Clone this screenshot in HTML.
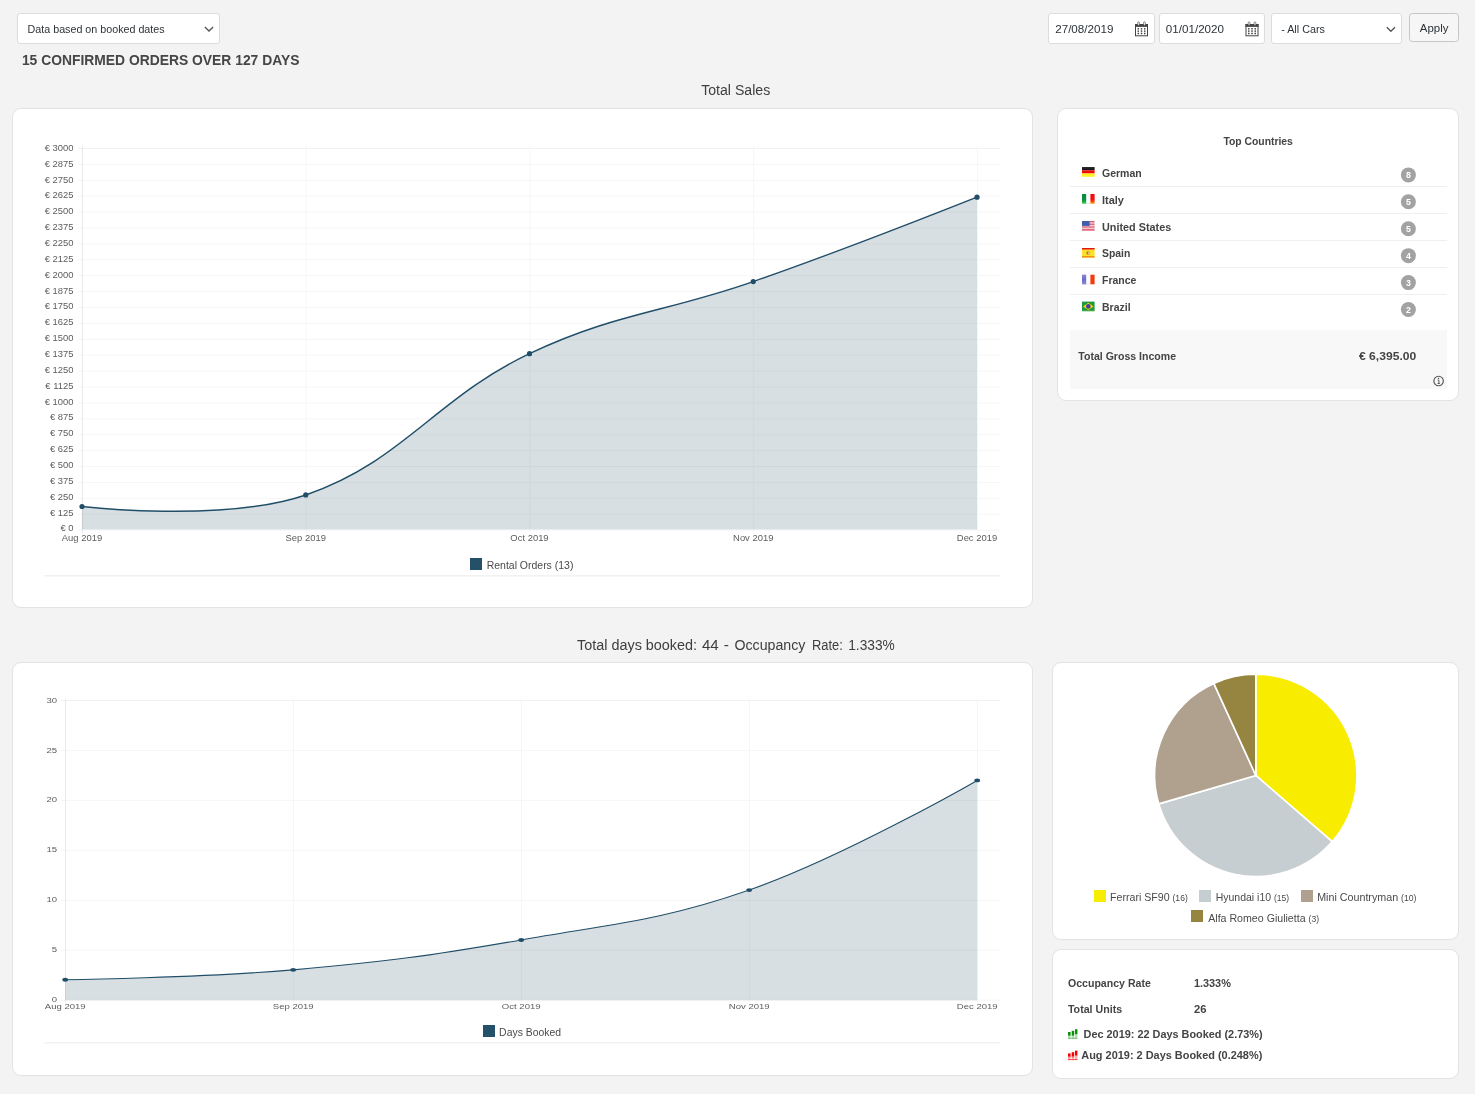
<!DOCTYPE html>
<html><head><meta charset="utf-8"><title>Stats</title>
<style>
*{box-sizing:border-box;margin:0;padding:0}
html,body{width:1475px;height:1094px;overflow:hidden}
body{background:#f3f3f3;font-family:"Liberation Sans",sans-serif;color:#444;position:relative}
.abs{position:absolute}
.card{position:absolute;background:#fff;border:1px solid #e3e3e3;border-radius:9px}
.inp{position:absolute;background:#fff;border:1px solid #dcdcdc;border-radius:3px;height:31px;top:13px;font-size:11.6px;color:#2c3338;line-height:29.6px;padding-left:6.4px;white-space:nowrap}
.t{position:absolute;white-space:nowrap;line-height:1}
.x{position:absolute;white-space:nowrap;line-height:1;transform-origin:0 0}
.x small{font-size:81%}
.b{font-weight:bold}
svg{position:absolute;left:0;top:0;overflow:visible;will-change:transform}
svg text{font-family:"Liberation Sans",sans-serif}
.row{position:absolute;left:1070px;width:376.5px;height:1px;background:#efefef}
.flag{position:absolute;left:1082px;width:13px;height:10px}
.cn{position:absolute;left:1102px;font-weight:bold;font-size:10.6px;color:#444;line-height:1;white-space:nowrap}
.bd{position:absolute;left:1401px;width:15px;height:15px;border-radius:50%;background:#a3a3a3;color:#fff;font-weight:bold;font-size:9px;line-height:15px;text-align:center}
.lg{position:absolute;width:12px;height:12px}
.lt{position:absolute;font-size:10.6px;color:#333;line-height:1;white-space:nowrap}
.lt small{font-size:8.6px}
</style></head><body>

<!-- top bar -->
<div class="inp" style="left:17px;width:203px;padding-left:10px;font-size:10.9px"></div>
<svg width="1475" height="60"><path d="M204.9 27.1 L209 31.1 L213.1 27.1" fill="none" stroke="#555" stroke-width="1.35"/></svg>

<div class="inp" style="left:1048px;width:106.5px"></div>
<div class="inp" style="left:1159px;width:106px"></div>
<div class="inp" style="left:1270.5px;width:131px;padding-left:10px;font-size:10.9px"></div>
<svg width="1475" height="60"><path d="M1386.8 27.3 L1390.9 31.2 L1395 27.3" fill="none" stroke="#555" stroke-width="1.35"/></svg>
<div class="abs" style="left:1409px;top:13px;width:50px;height:29px;border:1px solid #c6c6c6;border-radius:3.5px;background:#f6f6f6;color:#2c3338;font-size:11.5px;line-height:27px;text-align:center"></div>

<!-- titles -->

<!-- cards -->
<div class="card" style="left:12px;top:108px;width:1020.5px;height:500px"></div>
<div class="card" style="left:1057px;top:108px;width:402px;height:293px"></div>
<div class="card" style="left:12px;top:662px;width:1020.5px;height:413.5px"></div>
<div class="card" style="left:1052px;top:662px;width:407px;height:278px"></div>
<div class="card" style="left:1052px;top:949px;width:407px;height:129.5px"></div>

<!-- chart 1 -->
<svg width="1475" height="1094">
<line x1="78" x2="1000.2" y1="148.40" y2="148.40" stroke="#f0f0f0" stroke-width="1"/>
<line x1="78" x2="1000.2" y1="164.31" y2="164.31" stroke="#f6f6f6" stroke-width="1"/>
<line x1="78" x2="1000.2" y1="180.22" y2="180.22" stroke="#f6f6f6" stroke-width="1"/>
<line x1="78" x2="1000.2" y1="196.12" y2="196.12" stroke="#f6f6f6" stroke-width="1"/>
<line x1="78" x2="1000.2" y1="212.03" y2="212.03" stroke="#f6f6f6" stroke-width="1"/>
<line x1="78" x2="1000.2" y1="227.94" y2="227.94" stroke="#f6f6f6" stroke-width="1"/>
<line x1="78" x2="1000.2" y1="243.85" y2="243.85" stroke="#f6f6f6" stroke-width="1"/>
<line x1="78" x2="1000.2" y1="259.76" y2="259.76" stroke="#f6f6f6" stroke-width="1"/>
<line x1="78" x2="1000.2" y1="275.66" y2="275.66" stroke="#f6f6f6" stroke-width="1"/>
<line x1="78" x2="1000.2" y1="291.57" y2="291.57" stroke="#f6f6f6" stroke-width="1"/>
<line x1="78" x2="1000.2" y1="307.48" y2="307.48" stroke="#f6f6f6" stroke-width="1"/>
<line x1="78" x2="1000.2" y1="323.39" y2="323.39" stroke="#f6f6f6" stroke-width="1"/>
<line x1="78" x2="1000.2" y1="339.30" y2="339.30" stroke="#f6f6f6" stroke-width="1"/>
<line x1="78" x2="1000.2" y1="355.20" y2="355.20" stroke="#f6f6f6" stroke-width="1"/>
<line x1="78" x2="1000.2" y1="371.11" y2="371.11" stroke="#f6f6f6" stroke-width="1"/>
<line x1="78" x2="1000.2" y1="387.02" y2="387.02" stroke="#f6f6f6" stroke-width="1"/>
<line x1="78" x2="1000.2" y1="402.93" y2="402.93" stroke="#f6f6f6" stroke-width="1"/>
<line x1="78" x2="1000.2" y1="418.84" y2="418.84" stroke="#f6f6f6" stroke-width="1"/>
<line x1="78" x2="1000.2" y1="434.74" y2="434.74" stroke="#f6f6f6" stroke-width="1"/>
<line x1="78" x2="1000.2" y1="450.65" y2="450.65" stroke="#f6f6f6" stroke-width="1"/>
<line x1="78" x2="1000.2" y1="466.56" y2="466.56" stroke="#f6f6f6" stroke-width="1"/>
<line x1="78" x2="1000.2" y1="482.47" y2="482.47" stroke="#f6f6f6" stroke-width="1"/>
<line x1="78" x2="1000.2" y1="498.38" y2="498.38" stroke="#f6f6f6" stroke-width="1"/>
<line x1="78" x2="1000.2" y1="514.28" y2="514.28" stroke="#f6f6f6" stroke-width="1"/>
<line x1="78" x2="1000.2" y1="530.19" y2="530.19" stroke="#f6f6f6" stroke-width="1"/>
<line x1="82.40" x2="82.40" y1="145.80" y2="533.00" stroke="#e8e8e8" stroke-width="1"/>
<line x1="306.15" x2="306.15" y1="145.80" y2="533.00" stroke="#f6f6f6" stroke-width="1"/>
<line x1="529.90" x2="529.90" y1="145.80" y2="533.00" stroke="#f6f6f6" stroke-width="1"/>
<line x1="753.65" x2="753.65" y1="145.80" y2="533.00" stroke="#f6f6f6" stroke-width="1"/>
<line x1="977.40" x2="977.40" y1="145.80" y2="533.00" stroke="#f6f6f6" stroke-width="1"/>
<path d="M82.00 506.48 C82.00 506.48 223.68 522.96 305.75 494.94 C402.68 461.83 434.70 398.83 529.50 353.64 C613.70 313.50 664.52 312.63 753.25 281.60 C843.52 250.03 977.00 197.13 977.00 197.13 L977.00 529.40 L82.00 529.40 Z" fill="rgba(40,75,92,0.18)"/>
<path d="M82.00 506.48 C82.00 506.48 223.68 522.96 305.75 494.94 C402.68 461.83 434.70 398.83 529.50 353.64 C613.70 313.50 664.52 312.63 753.25 281.60 C843.52 250.03 977.00 197.13 977.00 197.13" fill="none" stroke="#204e69" stroke-width="1.5"/>
<circle cx="82.00" cy="506.48" r="2.6" fill="#204e69"/>
<circle cx="305.75" cy="494.94" r="2.6" fill="#204e69"/>
<circle cx="529.50" cy="353.64" r="2.6" fill="#204e69"/>
<circle cx="753.25" cy="281.60" r="2.6" fill="#204e69"/>
<circle cx="977.00" cy="197.13" r="2.6" fill="#204e69"/>
<text transform="translate(73.5 150.79) scale(1.137 1)" text-anchor="end" font-size="8.3" fill="#5c5c5c">€ 3000</text>
<text transform="translate(73.5 166.65) scale(1.137 1)" text-anchor="end" font-size="8.3" fill="#5c5c5c">€ 2875</text>
<text transform="translate(73.5 182.51) scale(1.137 1)" text-anchor="end" font-size="8.3" fill="#5c5c5c">€ 2750</text>
<text transform="translate(73.5 198.37) scale(1.137 1)" text-anchor="end" font-size="8.3" fill="#5c5c5c">€ 2625</text>
<text transform="translate(73.5 214.23) scale(1.137 1)" text-anchor="end" font-size="8.3" fill="#5c5c5c">€ 2500</text>
<text transform="translate(73.5 230.09) scale(1.137 1)" text-anchor="end" font-size="8.3" fill="#5c5c5c">€ 2375</text>
<text transform="translate(73.5 245.95) scale(1.137 1)" text-anchor="end" font-size="8.3" fill="#5c5c5c">€ 2250</text>
<text transform="translate(73.5 261.81) scale(1.137 1)" text-anchor="end" font-size="8.3" fill="#5c5c5c">€ 2125</text>
<text transform="translate(73.5 277.67) scale(1.137 1)" text-anchor="end" font-size="8.3" fill="#5c5c5c">€ 2000</text>
<text transform="translate(73.5 293.53) scale(1.137 1)" text-anchor="end" font-size="8.3" fill="#5c5c5c">€ 1875</text>
<text transform="translate(73.5 309.39) scale(1.137 1)" text-anchor="end" font-size="8.3" fill="#5c5c5c">€ 1750</text>
<text transform="translate(73.5 325.25) scale(1.137 1)" text-anchor="end" font-size="8.3" fill="#5c5c5c">€ 1625</text>
<text transform="translate(73.5 341.11) scale(1.137 1)" text-anchor="end" font-size="8.3" fill="#5c5c5c">€ 1500</text>
<text transform="translate(73.5 356.97) scale(1.137 1)" text-anchor="end" font-size="8.3" fill="#5c5c5c">€ 1375</text>
<text transform="translate(73.5 372.83) scale(1.137 1)" text-anchor="end" font-size="8.3" fill="#5c5c5c">€ 1250</text>
<text transform="translate(73.5 388.69) scale(1.137 1)" text-anchor="end" font-size="8.3" fill="#5c5c5c">€ 1125</text>
<text transform="translate(73.5 404.55) scale(1.137 1)" text-anchor="end" font-size="8.3" fill="#5c5c5c">€ 1000</text>
<text transform="translate(73.5 420.41) scale(1.137 1)" text-anchor="end" font-size="8.3" fill="#5c5c5c">€ 875</text>
<text transform="translate(73.5 436.27) scale(1.137 1)" text-anchor="end" font-size="8.3" fill="#5c5c5c">€ 750</text>
<text transform="translate(73.5 452.13) scale(1.137 1)" text-anchor="end" font-size="8.3" fill="#5c5c5c">€ 625</text>
<text transform="translate(73.5 467.99) scale(1.137 1)" text-anchor="end" font-size="8.3" fill="#5c5c5c">€ 500</text>
<text transform="translate(73.5 483.85) scale(1.137 1)" text-anchor="end" font-size="8.3" fill="#5c5c5c">€ 375</text>
<text transform="translate(73.5 499.71) scale(1.137 1)" text-anchor="end" font-size="8.3" fill="#5c5c5c">€ 250</text>
<text transform="translate(73.5 515.57) scale(1.137 1)" text-anchor="end" font-size="8.3" fill="#5c5c5c">€ 125</text>
<text transform="translate(73.5 531.43) scale(1.137 1)" text-anchor="end" font-size="8.3" fill="#5c5c5c">€ 0</text>
<text transform="translate(82.00 541.20) scale(1.137 1)" text-anchor="middle" font-size="8.3" fill="#5c5c5c">Aug 2019</text>
<text transform="translate(305.75 541.20) scale(1.137 1)" text-anchor="middle" font-size="8.3" fill="#5c5c5c">Sep 2019</text>
<text transform="translate(529.50 541.20) scale(1.137 1)" text-anchor="middle" font-size="8.3" fill="#5c5c5c">Oct 2019</text>
<text transform="translate(753.25 541.20) scale(1.137 1)" text-anchor="middle" font-size="8.3" fill="#5c5c5c">Nov 2019</text>
<text transform="translate(977.00 541.20) scale(1.137 1)" text-anchor="middle" font-size="8.3" fill="#5c5c5c">Dec 2019</text>
<line x1="61" x2="1000.2" y1="700.50" y2="700.50" stroke="#f0f0f0" stroke-width="1"/>
<line x1="61" x2="1000.2" y1="750.45" y2="750.45" stroke="#f6f6f6" stroke-width="1"/>
<line x1="61" x2="1000.2" y1="800.40" y2="800.40" stroke="#f6f6f6" stroke-width="1"/>
<line x1="61" x2="1000.2" y1="850.35" y2="850.35" stroke="#f6f6f6" stroke-width="1"/>
<line x1="61" x2="1000.2" y1="900.30" y2="900.30" stroke="#f6f6f6" stroke-width="1"/>
<line x1="61" x2="1000.2" y1="950.25" y2="950.25" stroke="#f6f6f6" stroke-width="1"/>
<line x1="61" x2="1000.2" y1="1000.20" y2="1000.20" stroke="#f6f6f6" stroke-width="1"/>
<line x1="65.60" x2="65.60" y1="698.50" y2="1002.50" stroke="#e8e8e8" stroke-width="1"/>
<line x1="293.60" x2="293.60" y1="698.50" y2="1002.50" stroke="#f6f6f6" stroke-width="1"/>
<line x1="521.60" x2="521.60" y1="698.50" y2="1002.50" stroke="#f6f6f6" stroke-width="1"/>
<line x1="749.60" x2="749.60" y1="698.50" y2="1002.50" stroke="#f6f6f6" stroke-width="1"/>
<line x1="977.60" x2="977.60" y1="698.50" y2="1002.50" stroke="#f6f6f6" stroke-width="1"/>
<path d="M65.20 979.81 C65.20 979.81 202.35 977.79 293.20 969.84 C384.75 961.83 430.68 955.76 521.20 939.93 C613.08 923.86 661.68 920.70 749.20 890.08 C844.08 856.89 977.20 780.41 977.20 780.41 L977.20 1000.20 L65.20 1000.20 Z" fill="rgba(40,75,92,0.18)"/>
<path d="M65.20 979.81 C65.20 979.81 202.35 977.79 293.20 969.84 C384.75 961.83 430.68 955.76 521.20 939.93 C613.08 923.86 661.68 920.70 749.20 890.08 C844.08 856.89 977.20 780.41 977.20 780.41" fill="none" stroke="#204e69" stroke-width="1.12"/>
<ellipse cx="65.20" cy="979.81" rx="2.85" ry="1.95" fill="#204e69"/>
<ellipse cx="293.20" cy="969.84" rx="2.85" ry="1.95" fill="#204e69"/>
<ellipse cx="521.20" cy="939.93" rx="2.85" ry="1.95" fill="#204e69"/>
<ellipse cx="749.20" cy="890.08" rx="2.85" ry="1.95" fill="#204e69"/>
<ellipse cx="977.20" cy="780.41" rx="2.85" ry="1.95" fill="#204e69"/>
<text transform="translate(57 702.84) scale(1.47 1)" text-anchor="end" font-size="6.5" fill="#5c5c5c">30</text>
<text transform="translate(57 752.64) scale(1.47 1)" text-anchor="end" font-size="6.5" fill="#5c5c5c">25</text>
<text transform="translate(57 802.44) scale(1.47 1)" text-anchor="end" font-size="6.5" fill="#5c5c5c">20</text>
<text transform="translate(57 852.24) scale(1.47 1)" text-anchor="end" font-size="6.5" fill="#5c5c5c">15</text>
<text transform="translate(57 902.04) scale(1.47 1)" text-anchor="end" font-size="6.5" fill="#5c5c5c">10</text>
<text transform="translate(57 951.84) scale(1.47 1)" text-anchor="end" font-size="6.5" fill="#5c5c5c">5</text>
<text transform="translate(57 1001.64) scale(1.47 1)" text-anchor="end" font-size="6.5" fill="#5c5c5c">0</text>
<text transform="translate(65.20 1009.14) scale(1.47 1)" text-anchor="middle" font-size="6.5" fill="#5c5c5c">Aug 2019</text>
<text transform="translate(293.20 1009.14) scale(1.47 1)" text-anchor="middle" font-size="6.5" fill="#5c5c5c">Sep 2019</text>
<text transform="translate(521.20 1009.14) scale(1.47 1)" text-anchor="middle" font-size="6.5" fill="#5c5c5c">Oct 2019</text>
<text transform="translate(749.20 1009.14) scale(1.47 1)" text-anchor="middle" font-size="6.5" fill="#5c5c5c">Nov 2019</text>
<text transform="translate(977.20 1009.14) scale(1.47 1)" text-anchor="middle" font-size="6.5" fill="#5c5c5c">Dec 2019</text>
<path d="M1255.80 775.40 L1255.80 674.30 A101.10 101.10 0 0 1 1332.21 841.61 Z" fill="#f8ec00" stroke="#fff" stroke-width="1.6" stroke-linejoin="round"/>
<path d="M1255.80 775.40 L1332.21 841.61 A101.10 101.10 0 0 1 1158.80 803.88 Z" fill="#c7ced1" stroke="#fff" stroke-width="1.6" stroke-linejoin="round"/>
<path d="M1255.80 775.40 L1158.80 803.88 A101.10 101.10 0 0 1 1213.80 683.44 Z" fill="#b0a08e" stroke="#fff" stroke-width="1.6" stroke-linejoin="round"/>
<path d="M1255.80 775.40 L1213.80 683.44 A101.10 101.10 0 0 1 1255.80 674.30 Z" fill="#968540" stroke="#fff" stroke-width="1.6" stroke-linejoin="round"/>
</svg>
<svg width="1475" height="1094"><line x1="44" x2="1000.5" y1="575.85" y2="575.85" stroke="#ebebeb"/><line x1="44" x2="1000.5" y1="1042.9" y2="1042.9" stroke="#ebebeb"/></svg>
<div class="lg" style="left:470px;top:558px;background:#255069"></div>


<div class="lg" style="left:483px;top:1025px;background:#255069"></div>

<!-- top countries -->
<div class="row" style="top:186px"></div>
<div class="row" style="top:213px"></div>
<div class="row" style="top:240px"></div>
<div class="row" style="top:267px"></div>
<div class="row" style="top:294px"></div>
<div class="abs" style="left:1070px;top:330px;width:376.5px;height:58.5px;background:#f8f8f8"></div>


<!-- flags -->
<svg width="1475" height="1094" style="pointer-events:none">
<defs>
<linearGradient id="gl" x1="0" y1="0" x2="0" y2="1"><stop offset="0" stop-color="#fff" stop-opacity=".18"/><stop offset=".5" stop-color="#fff" stop-opacity="0"/><stop offset="1" stop-color="#fff" stop-opacity=".22"/></linearGradient>
<linearGradient id="itg" x1="0" y1="0" x2="0" y2="1"><stop offset="0" stop-color="#0a8a44"/><stop offset=".6" stop-color="#0a9040"/><stop offset="1" stop-color="#3fd050"/></linearGradient>
<linearGradient id="itr" x1="0" y1="0" x2="0" y2="1"><stop offset="0" stop-color="#f20a0a"/><stop offset=".6" stop-color="#f41010"/><stop offset="1" stop-color="#ff9a00"/></linearGradient>
</defs>
<g transform="translate(1135 21.5)">
<rect x=".5" y="3" width="12" height="11.3" fill="#fff" stroke="#444" stroke-width="1"/>
<rect x="0" y="2.5" width="13" height="2.9" fill="#444"/>
<rect x="2.7" y=".3" width="1.7" height="3.6" rx=".8" fill="#fff" stroke="#444" stroke-width=".6"/>
<rect x="8.6" y=".3" width="1.7" height="3.6" rx=".8" fill="#fff" stroke="#444" stroke-width=".6"/>
<g fill="#444"><rect x="2.5" y="6.6" width="1.5" height="1.3"/><rect x="5.75" y="6.6" width="1.5" height="1.3"/><rect x="9" y="6.6" width="1.5" height="1.3"/>
<rect x="2.5" y="9" width="1.5" height="1.3"/><rect x="5.75" y="9" width="1.5" height="1.3"/><rect x="9" y="9" width="1.5" height="1.3"/>
<rect x="2.5" y="11.4" width="1.5" height="1.3"/><rect x="5.75" y="11.4" width="1.5" height="1.3"/><rect x="9" y="11.4" width="1.5" height="1.3"/></g>
<g stroke="#444" stroke-width=".5" opacity=".55"><line x1="3.25" y1="6.6" x2="3.25" y2="12.7"/><line x1="6.5" y1="6.6" x2="6.5" y2="12.7"/><line x1="9.75" y1="6.6" x2="9.75" y2="12.7"/></g>
</g>
<g transform="translate(1245.5 21.5)">
<rect x=".5" y="3" width="12" height="11.3" fill="#fff" stroke="#444" stroke-width="1"/>
<rect x="0" y="2.5" width="13" height="2.9" fill="#444"/>
<rect x="2.7" y=".3" width="1.7" height="3.6" rx=".8" fill="#fff" stroke="#444" stroke-width=".6"/>
<rect x="8.6" y=".3" width="1.7" height="3.6" rx=".8" fill="#fff" stroke="#444" stroke-width=".6"/>
<g fill="#444"><rect x="2.5" y="6.6" width="1.5" height="1.3"/><rect x="5.75" y="6.6" width="1.5" height="1.3"/><rect x="9" y="6.6" width="1.5" height="1.3"/>
<rect x="2.5" y="9" width="1.5" height="1.3"/><rect x="5.75" y="9" width="1.5" height="1.3"/><rect x="9" y="9" width="1.5" height="1.3"/>
<rect x="2.5" y="11.4" width="1.5" height="1.3"/><rect x="5.75" y="11.4" width="1.5" height="1.3"/><rect x="9" y="11.4" width="1.5" height="1.3"/></g>
<g stroke="#444" stroke-width=".5" opacity=".55"><line x1="3.25" y1="6.6" x2="3.25" y2="12.7"/><line x1="6.5" y1="6.6" x2="6.5" y2="12.7"/><line x1="9.75" y1="6.6" x2="9.75" y2="12.7"/></g>
</g>

<!-- DE -->
<g transform="translate(1082 167)"><rect width="12.6" height="3.3" fill="#000"/><rect y="3.3" width="12.6" height="3.2" fill="#f00000"/><rect y="6.5" width="12.6" height="3.3" fill="#ffee00"/><rect width="12.6" height="9.8" fill="url(#gl)"/></g>
<!-- IT -->
<g transform="translate(1082 194)"><rect width="12.6" height="9.7" fill="#fdfdfd"/><rect width="4.2" height="9.7" fill="url(#itg)"/><rect x="8.4" width="4.2" height="9.7" fill="url(#itr)"/><rect x="4.2" y="9" width="4.2" height=".7" fill="#ddd"/></g>
<!-- US -->
<g transform="translate(1082 221)"><rect width="12.6" height="9.8" fill="#f4e8ec"/>
<g fill="#d9506a"><rect y="0" width="12.6" height=".9"/><rect y="1.6" width="12.6" height=".8"/><rect y="3.2" width="12.6" height=".8"/><rect y="4.8" width="12.6" height=".8"/><rect y="6.4" width="12.6" height=".8"/><rect y="8" width="12.6" height=".8"/><rect y="9.2" width="12.6" height=".6"/></g>
<rect width="7.6" height="4.9" fill="#3f5fae"/></g>
<!-- ES -->
<g transform="translate(1082 248)"><rect width="12.6" height="9.5" fill="#f9e22a"/><rect width="12.6" height="1.5" fill="#e5141c"/><rect y="8.1" width="12.6" height="1.4" fill="#f38a10"/><circle cx="6" cy="5" r="1.7" fill="#c8502a" opacity=".8"/><circle cx="6.6" cy="5.1" r=".8" fill="#f4e0b0"/></g>
<!-- FR -->
<g transform="translate(1082 274.7)"><rect width="12.6" height="9.6" fill="#fff"/><rect width="4.2" height="9.6" fill="#6f6cc8"/><rect x="8.4" width="4.2" height="9.6" fill="#f43a10"/><rect width="4.2" height="9.6" fill="url(#gl)"/><rect x="4.2" y="9" width="4.2" height=".6" fill="#ddd"/></g>
<!-- BR -->
<g transform="translate(1082 301.6)"><rect width="12.6" height="9.6" fill="#1c9a3e"/><path d="M1 4.8 L6.3 1.2 L11.6 4.8 L6.3 8.4 Z" fill="#f6d20a"/><circle cx="6.3" cy="4.8" r="2.3" fill="#3e3fa8"/><rect y="8.6" width="12.6" height="1" fill="#7ac24a" opacity=".5"/></g>

<!-- info icon -->
<circle cx="1438.6" cy="381" r="4.75" fill="none" stroke="#555" stroke-width="1.15"/>
<circle cx="1438.5" cy="378.6" r=".75" fill="#555"/>
<path d="M1437.7 380.2 L1438.9 380.2 L1438.9 383.5 M1437.6 383.5 L1439.9 383.5" stroke="#555" stroke-width=".95" fill="none"/>

<!-- bars icons -->
<g transform="translate(1068 1029.2)">
<g fill="#0a8f0a"><rect x="0" y="2.8" width="2.6" height="3"/><rect x="3.7" y="1.6" width="2.5" height="4.2"/><rect x="7" y="0" width="2.4" height="5"/></g>
<g fill="#0a8f0a" opacity=".3"><rect x="0" y="5.8" width="2.6" height="3.7"/><rect x="3.7" y="5.8" width="2.5" height="3.7"/><rect x="7" y="5" width="2.4" height="4.5"/></g>
<g fill="#0a8f0a" opacity=".55"><rect x="0" y="5.8" width="2.6" height="1"/><rect x="3.7" y="5.8" width="2.5" height="1"/><rect x="0" y="8.6" width="9.4" height=".9"/></g>
</g>
<g transform="translate(1068 1050.6)">
<g fill="#f80000"><rect x="0" y="2.8" width="2.6" height="3"/><rect x="3.7" y="1.6" width="2.5" height="4.2"/><rect x="7" y="0" width="2.4" height="5"/></g>
<g fill="#f80000" opacity=".3"><rect x="0" y="5.8" width="2.6" height="3.7"/><rect x="3.7" y="5.8" width="2.5" height="3.7"/><rect x="7" y="5" width="2.4" height="4.5"/></g>
<g fill="#f80000" opacity=".6"><rect x="0" y="5.8" width="2.6" height="1"/><rect x="3.7" y="5.8" width="2.5" height="1"/><rect x="0" y="8.4" width="9.4" height="1.1"/></g>
</g>
</svg>

<!-- pie legend -->
<div class="lg" style="left:1094px;top:890px;background:#f8ec00"></div>
<div class="lg" style="left:1199px;top:890px;background:#c7ced1"></div>
<div class="lg" style="left:1301px;top:890px;background:#b0a08e"></div>
<div class="lg" style="left:1191px;top:910.4px;background:#968540"></div>

<!-- stats -->
<svg width="1475" height="1094" style="pointer-events:none;will-change:transform">
<text transform="translate(21.90 65.00) scale(0.9374 1)" font-size="14.8" fill="#464646" font-weight="bold">15 CONFIRMED ORDERS OVER 127 DAYS</text>
<text transform="translate(701.20 95.00) scale(0.9741 1)" font-size="14.5" fill="#3e3e3e">Total Sales</text>
<text transform="translate(577.05 650.00) scale(0.9937 1)" font-size="14.5" fill="#3e3e3e">Total days booked:</text>
<text transform="translate(701.90 650.00) scale(1.0419 1)" font-size="14.5" fill="#3e3e3e">44</text>
<text transform="translate(723.80 650.00) scale(1.0769 1)" font-size="14.5" fill="#3e3e3e">-</text>
<text transform="translate(734.50 650.00) scale(0.9789 1)" font-size="14.5" fill="#3e3e3e">Occupancy</text>
<text transform="translate(812.00 650.00) scale(0.8916 1)" font-size="14.5" fill="#3e3e3e">Rate:</text>
<text transform="translate(848.20 650.00) scale(0.9475 1)" font-size="14.5" fill="#3e3e3e">1.333%</text>
<circle cx="1408.4" cy="174.90" r="7.5" fill="#a2a2a2"/>
<text transform="translate(1405.95 178.00) scale(1.0000 1)" font-size="8.8" fill="#fff" font-weight="bold">8</text>
<circle cx="1408.4" cy="201.82" r="7.5" fill="#a2a2a2"/>
<text transform="translate(1405.95 204.92) scale(1.0000 1)" font-size="8.8" fill="#fff" font-weight="bold">5</text>
<circle cx="1408.4" cy="228.74" r="7.5" fill="#a2a2a2"/>
<text transform="translate(1405.95 231.84) scale(1.0000 1)" font-size="8.8" fill="#fff" font-weight="bold">5</text>
<circle cx="1408.4" cy="255.66" r="7.5" fill="#a2a2a2"/>
<text transform="translate(1405.95 258.76) scale(1.0000 1)" font-size="8.8" fill="#fff" font-weight="bold">4</text>
<circle cx="1408.4" cy="282.58" r="7.5" fill="#a2a2a2"/>
<text transform="translate(1405.95 285.68) scale(1.0000 1)" font-size="8.8" fill="#fff" font-weight="bold">3</text>
<circle cx="1408.4" cy="309.50" r="7.5" fill="#a2a2a2"/>
<text transform="translate(1405.95 312.60) scale(1.0000 1)" font-size="8.8" fill="#fff" font-weight="bold">2</text>
<text transform="translate(27.60 33.00) scale(1.0324 1)" font-size="10.4" fill="#2c3338">Data based on booked dates</text>
<text transform="translate(1055.20 33.00) scale(1.0400 1)" font-size="11.2" fill="#2c3338">27/08/2019</text>
<text transform="translate(1165.80 33.00) scale(1.0400 1)" font-size="11.2" fill="#2c3338">01/01/2020</text>
<text transform="translate(1281.20 33.00) scale(1.0360 1)" font-size="10.4" fill="#2c3338">- All Cars</text>
<text transform="translate(1419.80 32.00) scale(1.0338 1)" font-size="11.1" fill="#2c3338">Apply</text>
<text transform="translate(486.70 568.90) scale(1.0177 1)" font-size="10.3" fill="#4a4a4a">Rental Orders (13)</text>
<text transform="translate(499.10 1036.00) scale(1.0120 1)" font-size="10.3" fill="#4a4a4a">Days Booked</text>
<text transform="translate(1223.40 144.80) scale(0.9984 1)" font-size="10.4" fill="#444" font-weight="bold">Top Countries</text>
<text transform="translate(1102.00 176.80) scale(0.9936 1)" font-size="10.6" fill="#444" font-weight="bold">German</text>
<text transform="translate(1102.00 203.66) scale(1.0372 1)" font-size="10.6" fill="#444" font-weight="bold">Italy</text>
<text transform="translate(1102.00 230.52) scale(1.0231 1)" font-size="10.6" fill="#444" font-weight="bold">United States</text>
<text transform="translate(1102.00 257.38) scale(0.9839 1)" font-size="10.6" fill="#444" font-weight="bold">Spain</text>
<text transform="translate(1102.00 284.24) scale(0.9926 1)" font-size="10.6" fill="#444" font-weight="bold">France</text>
<text transform="translate(1102.00 311.10) scale(0.9909 1)" font-size="10.6" fill="#444" font-weight="bold">Brazil</text>
<text transform="translate(1078.30 360.10) scale(1.0165 1)" font-size="10.4" fill="#444" font-weight="bold">Total Gross Income</text>
<text transform="translate(1359.00 360.00) scale(1.1656 1)" font-size="10.4" fill="#444" font-weight="bold">€ 6,395.00</text>
<text transform="translate(1110.10 900.70) scale(1.0304 1)" font-size="10.3" fill="#4a4a4a">Ferrari SF90 <tspan font-size="8.34">(16)</tspan></text>
<text transform="translate(1215.70 900.70) scale(1.0195 1)" font-size="10.3" fill="#4a4a4a">Hyundai i10 <tspan font-size="8.34">(15)</tspan></text>
<text transform="translate(1317.20 900.70) scale(1.0404 1)" font-size="10.3" fill="#4a4a4a">Mini Countryman <tspan font-size="8.34">(10)</tspan></text>
<text transform="translate(1208.20 922.00) scale(1.0324 1)" font-size="10.3" fill="#4a4a4a">Alfa Romeo Giulietta <tspan font-size="8.34">(3)</tspan></text>
<text transform="translate(1067.90 987.00) scale(1.0592 1)" font-size="10.0" fill="#444" font-weight="bold">Occupancy Rate</text>
<text transform="translate(1193.90 987.00) scale(1.0908 1)" font-size="10.0" fill="#444" font-weight="bold">1.333%</text>
<text transform="translate(1067.90 1013.00) scale(1.0664 1)" font-size="10.0" fill="#444" font-weight="bold">Total Units</text>
<text transform="translate(1193.90 1013.00) scale(1.1241 1)" font-size="10.0" fill="#444" font-weight="bold">26</text>
<text transform="translate(1083.60 1037.90) scale(1.0898 1)" font-size="10.0" fill="#444" font-weight="bold">Dec 2019: 22 Days Booked (2.73%)</text>
<text transform="translate(1081.30 1059.00) scale(1.0941 1)" font-size="10.0" fill="#444" font-weight="bold">Aug 2019: 2 Days Booked (0.248%)</text>
</svg>

</body></html>
